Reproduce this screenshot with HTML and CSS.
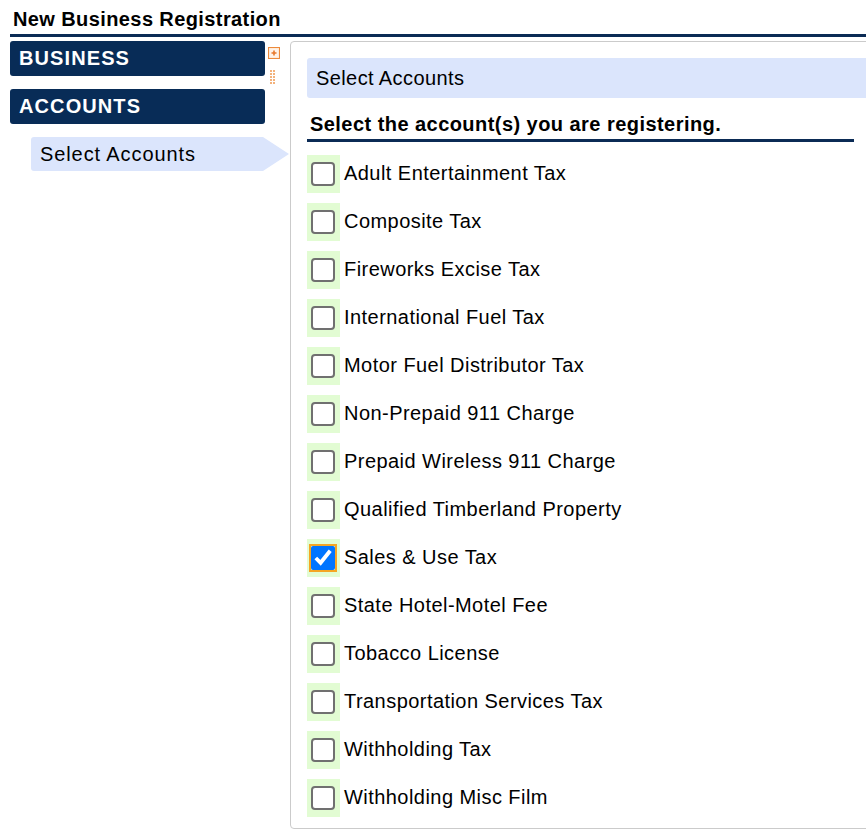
FILE: index.html
```html
<!DOCTYPE html>
<html lang="en">
<head>
<meta charset="utf-8">
<title>New Business Registration</title>
<link rel="stylesheet" href="styles.css">
</head>
<body>
<div class="page">
  <h1 class="page-title">New Business Registration</h1>
  <div class="layout">
    <nav class="sidenav">
      <div class="nav-section nav-business">BUSINESS</div>
      <div class="nav-tools">
        <svg class="tool-expand" width="12" height="12" viewBox="0 0 12 12">
          <rect x="0.5" y="0.5" width="11" height="11" fill="#fde3cc" stroke="#ec8a3c"/>
          <rect x="1.5" y="1.5" width="9" height="9" fill="#fff3e8"/>
          <path d="M6 3.5v5M3.5 6h5" stroke="#e8782a" stroke-width="1.6"/>
        </svg>
        <svg class="tool-grip" width="6" height="15" viewBox="0 0 6 15">
          <g fill="#f3b27c">
            <rect x="0" y="0" width="2" height="2"/><rect x="3" y="0" width="2" height="2"/>
            <rect x="0" y="3" width="2" height="2"/><rect x="3" y="3" width="2" height="2"/>
            <rect x="0" y="6" width="2" height="2"/><rect x="3" y="6" width="2" height="2"/>
            <rect x="0" y="9" width="2" height="2"/><rect x="3" y="9" width="2" height="2"/>
            <rect x="0" y="12" width="2" height="2"/><rect x="3" y="12" width="2" height="2"/>
          </g>
        </svg>
      </div>
      <div class="nav-section nav-accounts">ACCOUNTS</div>
      <div class="nav-item">Select Accounts</div>
    </nav>

    <section class="panel">
      <div class="panel-header">Select Accounts</div>
      <h2 class="panel-heading">Select the account(s) you are registering.</h2>
      <ul class="account-list">
        <li class="account"><span class="check-cell"><input type="checkbox" class="check"></span><label>Adult Entertainment Tax</label></li>
        <li class="account"><span class="check-cell"><input type="checkbox" class="check"></span><label>Composite Tax</label></li>
        <li class="account"><span class="check-cell"><input type="checkbox" class="check"></span><label>Fireworks Excise Tax</label></li>
        <li class="account"><span class="check-cell"><input type="checkbox" class="check"></span><label>International Fuel Tax</label></li>
        <li class="account"><span class="check-cell"><input type="checkbox" class="check"></span><label>Motor Fuel Distributor Tax</label></li>
        <li class="account"><span class="check-cell"><input type="checkbox" class="check"></span><label>Non-Prepaid 911 Charge</label></li>
        <li class="account"><span class="check-cell"><input type="checkbox" class="check"></span><label>Prepaid Wireless 911 Charge</label></li>
        <li class="account"><span class="check-cell"><input type="checkbox" class="check"></span><label>Qualified Timberland Property</label></li>
        <li class="account"><span class="check-cell"><input type="checkbox" class="check check-focus" checked></span><label>Sales &amp; Use Tax</label></li>
        <li class="account"><span class="check-cell"><input type="checkbox" class="check"></span><label>State Hotel-Motel Fee</label></li>
        <li class="account"><span class="check-cell"><input type="checkbox" class="check"></span><label>Tobacco License</label></li>
        <li class="account"><span class="check-cell"><input type="checkbox" class="check"></span><label>Transportation Services Tax</label></li>
        <li class="account"><span class="check-cell"><input type="checkbox" class="check"></span><label>Withholding Tax</label></li>
        <li class="account"><span class="check-cell"><input type="checkbox" class="check"></span><label>Withholding Misc Film</label></li>
      </ul>
    </section>
  </div>
</div>
</body>
</html>
```

FILE: styles.css
```css
html, body {
  margin: 0;
  padding: 0;
  background: #fff;
  overflow: hidden;
}

body {
  font-family: "Liberation Sans", Arial, sans-serif;
  color: #000;
}

.page {
  padding-left: 10px;
}

.page-title {
  margin: 0;
  height: 37px;
  box-sizing: border-box;
  padding: 8px 0 0 3px;
  font-size: 20px;
  line-height: 23px;
  font-weight: bold;
  letter-spacing: 0.4px;
  border-bottom: 3px solid #0b2b55;
}

.layout {
  display: flex;
  align-items: flex-start;
  margin-top: 4px;
}

.sidenav {
  display: grid;
  grid-template-columns: 255px 25px;
  grid-template-rows: 35px 35px 34px;
  row-gap: 13px;
  width: 280px;
  flex: none;
}

.nav-section {
  grid-column: 1;
  background: #082c57;
  color: #fff;
  border-radius: 3px;
  font-size: 20px;
  font-weight: bold;
  letter-spacing: 1.1px;
  line-height: 35px;
  padding-left: 9px;
}

.nav-business { grid-row: 1; }
.nav-accounts { grid-row: 2; }

.nav-tools {
  grid-column: 2;
  grid-row: 1 / 3;
  display: flex;
  flex-direction: column;
  align-items: flex-start;
  padding: 6px 0 0 3px;
  gap: 11px;
}

.tool-grip {
  margin-left: 2px;
}

.nav-item {
  grid-column: 1 / 3;
  grid-row: 3;
  margin-left: 21px;
  margin-right: 1px;
  background: #dbe5fc;
  font-size: 20px;
  letter-spacing: 0.9px;
  line-height: 34px;
  padding-left: 9px;
  border-radius: 3px 0 0 3px;
  clip-path: polygon(0 0, calc(100% - 26px) 0, 100% 50%, calc(100% - 26px) 100%, 0 100%);
}

.panel {
  flex: none;
  width: 600px;
  border: 1px solid #cbcbcb;
  border-radius: 4px;
  padding: 16px 16px 11px 16px;
}

.panel-header {
  background: #dbe5fc;
  height: 40px;
  line-height: 40px;
  padding-left: 9px;
  border-radius: 3px 0 0 3px;
  font-size: 20px;
  letter-spacing: 0.4px;
}

.panel-heading {
  margin: 14px 0 0 0;
  width: 544px;
  padding: 0 0 3px 3px;
  font-size: 20px;
  line-height: 24px;
  font-weight: bold;
  letter-spacing: 0.45px;
  border-bottom: 3px solid #0b2b55;
}

.account-list {
  list-style: none;
  margin: 13px 0 0 0;
  padding: 0;
  display: flex;
  flex-direction: column;
  gap: 10px;
}

.account {
  display: flex;
  align-items: center;
  gap: 4px;
  height: 38px;
}

.check-cell {
  width: 33px;
  height: 38px;
  background: #e2fcd3;
  display: flex;
  align-items: center;
  padding-left: 4px;
  box-sizing: border-box;
}

.check {
  margin: 0;
  width: 24px;
  height: 24px;
  accent-color: #0075ff;
}

.check:not(:checked) {
  appearance: none;
  -webkit-appearance: none;
  box-sizing: border-box;
  background: #fff;
  border: 2px solid #707070;
  border-radius: 4px;
}

.check-focus {
  outline: 2px solid #f5a623;
  outline-offset: 0;
  border-radius: 3px;
}

.account label {
  font-size: 20px;
  letter-spacing: 0.45px;
  line-height: 24px;
  padding-bottom: 3px;
}
```
